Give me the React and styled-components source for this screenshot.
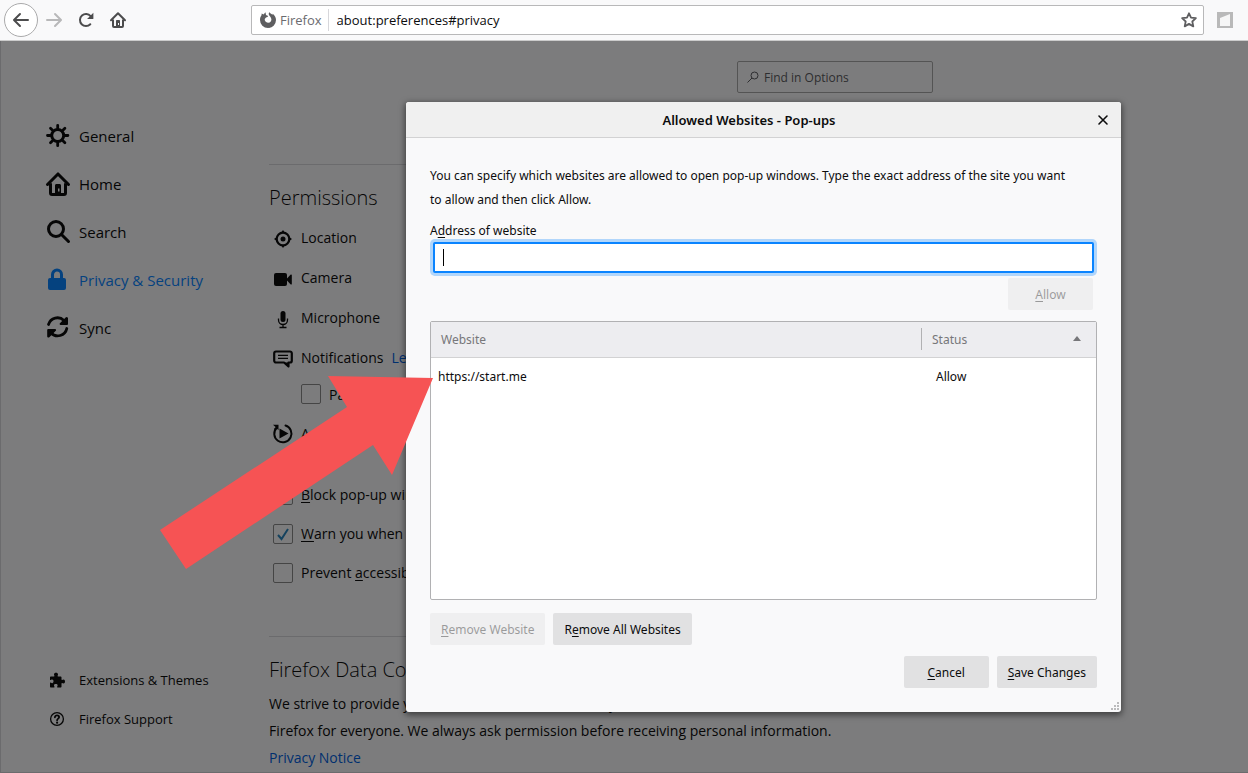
import React from "react";
import styled, { createGlobalStyle, css } from "styled-components";

const App = () => {
  return (
    <Page>
      <GlobalStyle />
      <Toolbar>
        <BackButton aria-label="Back">
          <Icon size={16} viewBox="0 0 16 16">
            <path d="M15 7H3.414l4.293-4.293a1 1 0 0 0-1.414-1.414l-6 6a1 1 0 0 0 0 1.414l6 6a1 1 0 0 0 1.414-1.414L3.414 9H15a1 1 0 0 0 0-2z" />
          </Icon>
        </BackButton>
        <NavButton aria-label="Forward" disabled>
          <Icon size={16} viewBox="0 0 16 16">
            <path d="M15.707 7.293l-6-6a1 1 0 0 0-1.414 1.414L12.586 7H1a1 1 0 0 0 0 2h11.586l-4.293 4.293a1 1 0 1 0 1.414 1.414l6-6a1 1 0 0 0 0-1.414z" />
          </Icon>
        </NavButton>
        <NavButton aria-label="Reload">
          <Icon size={16} viewBox="0 0 16 16">
            <path
              d="M12.3 12.2A6 6 0 1 1 12.6 4.2"
              fill="none"
              stroke="currentColor"
              strokeWidth="2"
              strokeLinecap="round"
            />
            <path d="M15.4 0.8v5.7a.6.6 0 0 1-.6.6H9.1z" />
          </Icon>
        </NavButton>
        <NavButton aria-label="Home">
          <Icon size={16} viewBox="0 0 16 16">
            <HouseShape />
          </Icon>
        </NavButton>
        <UrlBar>
          <Identity>
            <Icon size={16} viewBox="0 0 16 16">
              <path d="M8 16a8 8 0 0 1-8-8c0-2.200.6-3.600 1.500-4.800L1.700 1.500l1.800 1L5.500.2l.5 2.700 2.200 1.100c-.2 1-1.200 1.200-2.200 1.500C5 6.400 4.500 7.300 4.800 8.300c.5 1.600 1.800 2.500 3.400 2.500 1.900 0 3.200-1.400 3.200-3.200C11.400 5 9.500 4.200 8.800 2.500 8.600 1.500 8.900.7 9.500.2c1 1.500 2.200 1.700 3 2.600l.3-1.100C15 3.500 16 5.700 16 8a8 8 0 0 1-8 8z" />
            </Icon>
            Firefox
          </Identity>
          <UrlInput aria-label="Address" defaultValue="about:preferences#privacy" />
          <StarButton aria-label="Bookmark this page">
            <Icon size={16} viewBox="0 0 16 16">
              <path
                d="M8 1.300l2 4.400 4.900.5-3.600 3.300 1 4.900L8 11.900l-4.300 2.500 1-4.900L1.100 6.200 6 5.700z"
                fill="none"
                stroke="currentColor"
                strokeWidth="1.800"
                strokeLinejoin="round"
              />
            </Icon>
          </StarButton>
        </UrlBar>
        <ExtensionButton aria-label="Extension">
          <Icon size={16} viewBox="0 0 16 16">
            <path d="M0 0h16v16H0z" fill="#b9b9b9" />
            <path d="M3 6l10-4v12H3z" fill="#f6f6f6" />
          </Icon>
        </ExtensionButton>
      </Toolbar>

      <Content>
        <Sidebar>
          <Categories>
            <Category href="#general">
              <Icon size={24} viewBox="0 0 24 24">
                <g fill="none" stroke="currentColor" strokeLinecap="round">
                  <circle cx="11.700" cy="11.500" r="6" strokeWidth="3" />
                  <path
                    d="M11.700 1.300v3M11.700 18.700v3M1.500 11.500h3M18.900 11.500h3M4.500 4.300l2 2M16.900 16.700l2 2M4.500 18.700l2-2M16.900 6.300l2-2"
                    strokeWidth="2.800"
                  />
                </g>
              </Icon>
              General
            </Category>
            <Category href="#home">
              <Icon size={24} viewBox="0 0 16 16">
                <HouseShape />
              </Icon>
              Home
            </Category>
            <Category href="#search">
              <Icon size={24} viewBox="0 0 24 24">
                <g fill="none" stroke="currentColor" strokeLinecap="round">
                  <circle cx="10" cy="9" r="7.500" strokeWidth="3" />
                  <path d="M15.500 14.500l7 7" strokeWidth="3" />
                </g>
              </Icon>
              Search
            </Category>
            <Category href="#privacy" $active>
              <Icon size={24} viewBox="0 0 24 24">
                <path
                  d="M6.500 12V6.500a4.500 4.500 0 0 1 9 0v5.500"
                  fill="none"
                  stroke="currentColor"
                  strokeWidth="3"
                />
                <rect x="2" y="10" width="18" height="12" rx="2" />
              </Icon>
              Privacy &amp; Security
            </Category>
            <Category href="#sync">
              <Icon size={24} viewBox="0 0 24 24">
                <g fill="none" stroke="currentColor" strokeWidth="2.800" strokeLinecap="round">
                  <path d="M2.500 8.500A9.300 9.300 0 0 1 18 4.500" />
                  <path d="M20.800 12.500A9.300 9.300 0 0 1 5 17" />
                </g>
                <path d="M21 1.200a1 1 0 0 1 1 1V8a1 1 0 0 1-1 1h-6.500a1 1 0 0 1-.6-1.700l6-6a1 1 0 0 1 1.100-.1zM2.200 21.500a1 1 0 0 1-1-1V14a1 1 0 0 1 1-1h7a1 1 0 0 1 .6 1.700l-6.500 6.500a1 1 0 0 1-1.100.3z" />
              </Icon>
              Sync
            </Category>
          </Categories>
          <Categories>
            <FooterLink href="#addons">
              <Icon size={16} viewBox="0 0 16 16">
                <path d="M14.500 7.500c-.6 0-.9.500-1.500.500-.4 0-.5-.3-.5-.700V5.500c0-.6-.4-1-1-1H9.200c-.5 0-.7-.2-.7-.5 0-.6.500-.8.500-1.600C9 1.500 8.200.8 7 .8s-2 .7-2 1.600c0 .8.500 1 .5 1.600 0 .3-.3.500-.7.500H2c-.6 0-1 .4-1 1v2c0 .4.200.6.500.6.600 0 .7-.6 1.600-.6.900 0 1.400.8 1.400 1.800s-.5 1.900-1.400 1.900-1-.6-1.600-.6c-.3 0-.5.200-.5.600V14.500c0 .6.400 1 1 1h2.800c.4 0 .7-.2.700-.6 0-.6-.5-.8-.5-1.500 0-.8.700-1.300 1.800-1.300s1.800.5 1.800 1.300c0 .7-.5.900-.5 1.500 0 .4.300.6.700.6h2.700c.6 0 1-.4 1-1v-2.700c0-.5.200-.8.500-.8.600 0 .9.500 1.500.5.900 0 1.500-.9 1.500-2s-.6-2-1.500-2z" />
              </Icon>
              Extensions &amp; Themes
            </FooterLink>
            <FooterLink href="#support">
              <Icon size={16} viewBox="0 0 16 16">
                <g fill="none" stroke="currentColor" strokeLinecap="round">
                  <circle cx="8" cy="8" r="6.400" strokeWidth="1.300" />
                  <path
                    d="M5.900 6.300c0-1.300 1-2 2.100-2s2.100.8 2.100 1.900c0 1.300-2 1.500-2 3"
                    strokeWidth="1.800"
                  />
                </g>
                <circle cx="8.100" cy="11.700" r="1.100" />
              </Icon>
              Firefox Support
            </FooterLink>
          </Categories>
        </Sidebar>

        <Main>
          <FindBox>
            <Icon size={12} viewBox="0 0 12 12">
              <g fill="none" stroke="currentColor" strokeWidth="1">
                <circle cx="7.500" cy="4.500" r="3.500" />
                <path d="M5 7l-4.500 4.500" />
              </g>
            </Icon>
            <FindInput aria-label="Find in Options" placeholder="Find in Options" />
          </FindBox>

          <Section>
            <Heading>Permissions</Heading>
            <Permission>
              <Icon size={20} viewBox="0 0 20 20">
                <circle cx="10" cy="12" r="6.300" fill="none" stroke="currentColor" strokeWidth="2.200" />
                <circle cx="10" cy="12" r="2.500" />
                <path d="M10 3l2.200 3H7.800zM10 21l2.200-3H7.800zM1 12l3-2.200v4.400zM19 12l-3-2.200v4.400z" />
              </Icon>
              Location
            </Permission>
            <Permission>
              <Icon size={20} viewBox="0 0 20 20">
                <rect x="1" y="6" width="13" height="13" rx="2" />
                <path d="M13.500 12l4-4.300c.6-.6 1.300-.3 1.300.4v8.800c0 .7-.7 1-1.300.4l-4-4.300z" />
              </Icon>
              Camera
            </Permission>
            <Permission>
              <Icon size={20} viewBox="0 0 20 20">
                <rect x="7.500" y="4" width="5" height="11" rx="2.500" />
                <path
                  d="M5.500 11.500v1.500a4.500 4.500 0 0 0 9 0v-1.500M10 17.500v3M6.500 20.500h7"
                  fill="none"
                  stroke="currentColor"
                  strokeWidth="1.300"
                />
              </Icon>
              Microphone
            </Permission>
            <Permission>
              <Icon size={20} viewBox="0 0 20 20">
                <path
                  d="M3 4.500h14a1.800 1.800 0 0 1 1.800 1.800v7.400a1.800 1.800 0 0 1-1.800 1.800h-1.500V19.500L11 15.500H3a1.800 1.800 0 0 1-1.800-1.800V6.300A1.800 1.800 0 0 1 3 4.500z"
                  fill="none"
                  stroke="currentColor"
                  strokeWidth="2.200"
                  strokeLinejoin="round"
                />
                <path d="M11 15.500h5v5z" />
                <path d="M5 8.300h10M5 11.300h10" stroke="currentColor" strokeWidth="1.300" />
              </Icon>
              <span>Notifications</span>
              <Link href="#learn">Learn more</Link>
            </Permission>
            <CheckRow $indent>
              <CheckBox type="checkbox" />
              <span>Pause notifications until Firefox restarts</span>
            </CheckRow>
            <Autoplay>
              <Icon size={20} viewBox="0 0 20 20">
                <path
                  d="M12.500 2.500a8.600 8.600 0 1 1-8.800 2.200"
                  fill="none"
                  stroke="currentColor"
                  strokeWidth="2"
                  strokeLinecap="round"
                />
                <path d="M0 1.800h5.500v5.500L3.800 5.500 2 7.200.8 6l2-1.800z" />
                <path d="M6.500 5.500v10l9-5z" />
              </Icon>
              Autoplay
            </Autoplay>
            <CheckGroup>
              <CheckRow>
                <CheckBox type="checkbox" defaultChecked />
                <span>
                  <u>B</u>lock pop-up windows
                </span>
              </CheckRow>
              <CheckRow>
                <CheckBox type="checkbox" defaultChecked />
                <span>
                  <u>W</u>arn you when websites try to install add-ons
                </span>
              </CheckRow>
              <CheckRow>
                <CheckBox type="checkbox" />
                <span>
                  Prevent <u>a</u>ccessibility services from accessing your browser
                </span>
              </CheckRow>
            </CheckGroup>
          </Section>

          <Section>
            <Heading>Firefox Data Collection and Use</Heading>
            <Text>
              We strive to provide you with choices and collect only what we need
              <br />
              Firefox for everyone. We always ask permission before receiving personal information.
              <br />
              <Link href="#notice">Privacy Notice</Link>
            </Text>
          </Section>
        </Main>

        <Overlay>
          <Dialog role="dialog" aria-labelledby="dialog-title">
            <DialogHeader>
              <DialogTitle id="dialog-title">Allowed Websites - Pop-ups</DialogTitle>
              <CloseButton aria-label="Close">
                <Icon size={10} viewBox="0 0 10 10">
                  <path
                    d="M1 1l8 8M9 1L1 9"
                    stroke="currentColor"
                    strokeWidth="1.600"
                    strokeLinecap="round"
                  />
                </Icon>
              </CloseButton>
            </DialogHeader>
            <DialogBody>
              <Description>
                You can specify which websites are allowed to open pop-up windows. Type the exact
                address of the site you want to allow and then click Allow.
              </Description>
              <AddressLabel htmlFor="address">
                A<u>d</u>dress of website
              </AddressLabel>
              <AddressField>
                <AddressInput id="address" type="text" />
              </AddressField>
              <AllowRow>
                <Button disabled>
                  <u>A</u>llow
                </Button>
              </AllowRow>
              <SiteList>
                <SiteTable>
                  <thead>
                    <tr>
                      <SiteHead>Website</SiteHead>
                      <SiteHead $status>
                        <StatusHead>
                          Status
                          <Icon size={8} viewBox="0 0 8 8">
                            <path d="M4 1l4 5H0z" />
                          </Icon>
                        </StatusHead>
                      </SiteHead>
                    </tr>
                  </thead>
                  <tbody>
                    <tr>
                      <SiteCell>https://start.me</SiteCell>
                      <SiteCell $status>Allow</SiteCell>
                    </tr>
                  </tbody>
                </SiteTable>
              </SiteList>
              <Actions>
                <Button disabled>
                  <u>R</u>emove Website
                </Button>
                <Button>
                  R<u>e</u>move All Websites
                </Button>
              </Actions>
              <Actions $end>
                <Button>
                  <u>C</u>ancel
                </Button>
                <Button>
                  <u>S</u>ave Changes
                </Button>
              </Actions>
            </DialogBody>
            <Resizer viewBox="0 0 8 8">
              <path d="M6 0h2v2H6zM3 3h2v2H3zM6 3h2v2H6zM0 6h2v2H0zM3 6h2v2H3zM6 6h2v2H6z" />
            </Resizer>
          </Dialog>
        </Overlay>
        <Arrow viewBox="0 0 273 193">
          <path d="M273 2L168 0l19 31L0 154l26 39 187-124 19 30z" />
        </Arrow>
      </Content>
    </Page>
  );
};

const HouseShape = () => (
  <g>
    <g fill="none" stroke="currentColor" strokeLinejoin="round" strokeWidth="2">
      <path d="M1 8.300l7-7 7 7" strokeLinecap="round" />
      <path d="M3 7.500v6.500c0 .6.400 1 1 1h8c.6 0 1-.4 1-1V7.500" />
    </g>
    <path
      d="M6 15V9c0-.6.400-1 1-1h2c.6 0 1 .4 1 1v6zM8 11v2h1v-2z"
      fillRule="evenodd"
    />
  </g>
);

const GlobalStyle = createGlobalStyle`
  * {
    box-sizing: border-box;
  }

  body {
    margin: 0;
    font-family: "Open Sans", "Noto Sans", sans-serif;
    font-size: 14px;
    color: #0c0c0d;
  }

  button,
  input {
    font-family: inherit;
    font-size: inherit;
    color: inherit;
  }

  u {
    text-underline-offset: 2px;
  }
`;

const Icon = styled.svg.attrs((props) => ({ "aria-hidden": true, width: props.size, height: props.size }))`
  flex: none;
  fill: currentColor;
  display: block;
  overflow: visible;
`;

const Page = styled.div`
  min-height: 100vh;
  display: flex;
  flex-direction: column;
`;

const Toolbar = styled.header`
  display: flex;
  align-items: center;
  height: 41px;
  padding: 0 15px 0 4px;
  background: #f9f9fa;
  border-bottom: 1px solid #cccccc;
`;

const NavButton = styled.button`
  display: flex;
  align-items: center;
  justify-content: center;
  width: 32px;
  height: 32px;
  padding: 0;
  border: none;
  background: none;
  color: #4c4c4d;

  &:disabled {
    color: #b8b8b9;
  }
`;

const BackButton = styled(NavButton)`
  width: 34px;
  height: 34px;
  border: 1px solid #aaaaab;
  border-radius: 50%;
  background: #ffffff;
`;

const UrlBar = styled.div`
  flex: 1;
  display: flex;
  align-items: center;
  height: 30px;
  margin-left: 117px;
  padding-left: 8px;
  background: #ffffff;
  border: 1px solid #b8b8b9;
  border-radius: 2px;
  font-size: 13px;
`;

const Identity = styled.div`
  display: flex;
  align-items: center;
  gap: 4px;
  height: 22px;
  padding-right: 6px;
  border-right: 1px solid #d7d7db;
  color: #6b6b6f;

  svg {
    color: #5e5e60;
  }
`;

const UrlInput = styled.input`
  flex: 1;
  min-width: 0;
  padding: 0 8px;
  border: none;
  outline: none;
  background: none;
`;

const StarButton = styled(NavButton)`
  width: 28px;
  height: 28px;
  color: #5e5e60;
`;

const ExtensionButton = styled(NavButton)`
  width: 16px;
  margin-left: 13px;
`;

const Content = styled.div`
  position: relative;
  flex: 1;
  display: flex;
  background: #f9f9fa;
  border-left: 1px solid #d7d7db;
  border-bottom: 1px solid #d7d7db;
`;

const Sidebar = styled.nav`
  width: 268px;
  flex: none;
  display: flex;
  flex-direction: column;
  justify-content: space-between;
  padding: 71px 0 34px 45px;
`;

const Categories = styled.div`
  display: flex;
  flex-direction: column;
`;

const Category = styled.a`
  display: flex;
  align-items: center;
  gap: 9px;
  height: 48px;
  font-size: 15px;
  text-decoration: none;
  color: ${(props) => (props.$active ? "#0a84ff" : "#0c0c0d")};
`;

const FooterLink = styled(Category)`
  gap: 14px;
  height: 39px;
  padding-left: 3px;
  font-size: 13px;
`;

const Main = styled.main`
  flex: 1;
  max-width: 664px;
  padding-top: 20px;
`;

const FindBox = styled.div`
  display: flex;
  align-items: center;
  gap: 5px;
  width: 196px;
  height: 32px;
  margin: 0 0 71px auto;
  padding: 0 9px;
  background: #f9f9fa;
  border: 1px solid #a8a8a9;
  border-radius: 2px;
  font-size: 12px;
  color: #5c5c61;
`;

const FindInput = styled.input`
  width: 100%;
  min-width: 0;
  padding: 0;
  border: none;
  outline: none;
  background: none;

  &::placeholder {
    color: #5c5c61;
    opacity: 1;
  }
`;

const Section = styled.section`
  border-top: 1px solid #d7d7db;
  padding-top: 16px;
  white-space: nowrap;

  & + & {
    margin-top: 44px;
  }
`;

const Heading = styled.h2`
  margin: 0 0 3px;
  font-size: 20px;
  font-weight: 300;
  line-height: 34px;
`;

const Permission = styled.div`
  display: flex;
  align-items: center;
  gap: 8px;
  height: 40px;
  padding: 0 0 2px 4px;
`;

const Autoplay = styled(Permission)`
  margin-top: 4px;
`;

const CheckRow = styled.label`
  display: flex;
  align-items: center;
  gap: 8px;
  height: ${(props) => (props.$indent ? "32px" : "39px")};
  padding-left: ${(props) => (props.$indent ? "32px" : "4px")};
`;

const CheckGroup = styled.div`
  margin-top: 21px;
`;

const CheckBox = styled.input`
  appearance: none;
  width: 20px;
  height: 20px;
  margin: 0;
  border: 1px solid #8a8a8b;
  border-radius: 2px;
  background: #f9f9fa;

  &:checked {
    background: #f9f9fa
      url("data:image/svg+xml,%3Csvg xmlns='http://www.w3.org/2000/svg' viewBox='0 0 18 18'%3E%3Cpath d='M4 10l3.500 4L14 4' fill='none' stroke='%232a84bd' stroke-width='2'/%3E%3C/svg%3E");
  }
`;

const Link = styled.a`
  color: #0060df;
  text-decoration: none;
`;

const Text = styled.p`
  margin: 0;
  line-height: 27px;
`;

const Overlay = styled.div`
  position: absolute;
  inset: 0 0 -1px -1px;
  display: flex;
  align-items: center;
  padding: 0 127px 0 406px;
  background: rgba(0, 0, 0, 0.5);
`;

const Dialog = styled.div`
  position: relative;
  flex: 1;
  background: #f9f9fa;
  border-radius: 3px;
  box-shadow: 0 2px 6px 1px rgba(0, 0, 0, 0.5);
  font-family: "Noto Sans", "Open Sans", sans-serif;
  font-size: 12px;
`;

const DialogHeader = styled.div`
  display: flex;
  align-items: center;
  height: 36px;
  padding: 1px 7px 0 0;
  background: #f0f0f0;
  border-bottom: 1px solid #d2d2d3;
  border-radius: 3px 3px 0 0;
`;

const DialogTitle = styled.h1`
  flex: 1;
  margin: 0;
  font-size: 13px;
  font-weight: 600;
  text-align: center;
`;

const CloseButton = styled(NavButton)`
  width: 22px;
  color: #0c0c0d;
`;

const DialogBody = styled.div`
  padding: 26px 24px 24px;
`;

const Description = styled.p`
  margin: 0 0 9px;
  padding-right: 24px;
  line-height: 24px;
`;

const AddressLabel = styled.label`
  display: block;
  line-height: 20px;
`;

const AddressField = styled.div`
  position: relative;
  margin: 1px 3px 5px;

  /* text caret */
  &::after {
    content: "";
    position: absolute;
    left: 10px;
    top: 7px;
    width: 1px;
    height: 17px;
    background: #000000;
  }
`;

const AddressInput = styled.input`
  display: block;
  width: 100%;
  height: 31px;
  padding: 0 8px;
  border: 2px solid #0a84ff;
  border-radius: 2px;
  outline: none;
  box-shadow: 0 0 0 3px rgba(10, 132, 255, 0.3);
  background: #ffffff;
`;

const AllowRow = styled.div`
  display: flex;
  justify-content: flex-end;
  padding-right: 4px;
`;

const Button = styled.button`
  min-width: 85px;
  height: 32px;
  padding: 0 11px;
  border: none;
  border-radius: 2px;
  background: #e1e1e2;
  color: #0c0c0d;

  &:disabled {
    opacity: 0.4;
  }
`;

const SiteList = styled.div`
  height: 279px;
  margin: 11px 0 13px;
  background: #ffffff;
  border: 1px solid #b1b1b3;
  border-radius: 2px;
`;

const SiteTable = styled.table`
  width: 100%;
  table-layout: fixed;
  border-collapse: collapse;
`;

const SiteHead = styled.th`
  height: 35px;
  padding: 0 0 0 10px;
  background: #ededf0;
  border-bottom: 1px solid #d2d2d3;
  font-weight: 400;
  text-align: left;
  color: #77777a;
  ${(props) =>
    props.$status &&
    css`
      width: 175px;
      padding-left: 0;
    `}
`;

const StatusHead = styled.div`
  display: flex;
  align-items: center;
  justify-content: space-between;
  height: 22px;
  padding: 0 15px 0 10px;
  border-left: 1px solid #b1b1b3;
`;

const SiteCell = styled.td`
  height: 39px;
  padding: 0 0 0 ${(props) => (props.$status ? "15px" : "7px")};
`;

const Actions = styled.div`
  display: flex;
  gap: 8px;
  justify-content: ${(props) => (props.$end ? "flex-end" : "flex-start")};

  & + & {
    margin-top: 11px;
  }
`;

const Resizer = styled.svg`
  position: absolute;
  right: 2px;
  bottom: 2px;
  width: 8px;
  height: 8px;
  fill: #bbbbbc;
`;

const Arrow = styled.svg`
  position: absolute;
  left: 159px;
  top: 335px;
  width: 273px;
  height: 193px;
  fill: #f65354;
  pointer-events: none;
`;

export default App;
